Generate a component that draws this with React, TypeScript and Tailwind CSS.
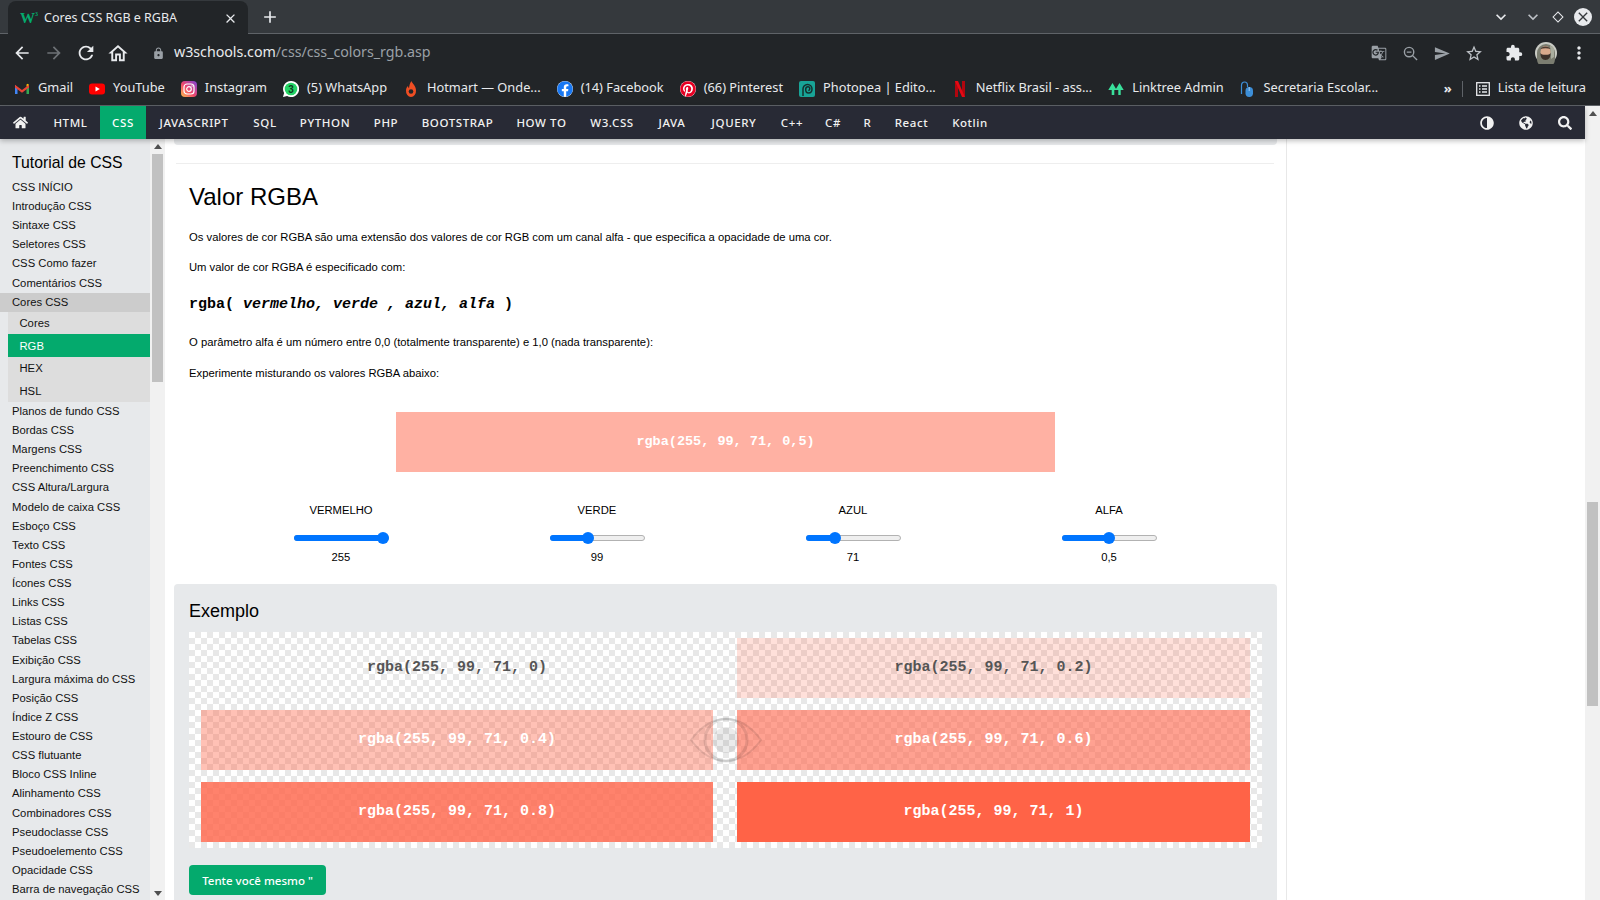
import React from "react";
import {
  MdArrowBack,
  MdArrowForward,
  MdRefresh,
  MdOutlineHome,
  MdLock,
  MdMoreVert,
  MdClose,
  MdAdd,
  MdExpandMore,
  MdSend,
  MdOutlineStarBorder,
  MdExtension,
  MdGTranslate,
} from "react-icons/md";
import { FaHome, FaAdjust, FaGlobeAmericas, FaSearch, FaFacebook, FaPinterest } from "react-icons/fa";

const GmailIcon = () => (
  <svg viewBox="0 0 16 16" className="w-4 h-4">
    <path d="M1 4v9h2.500V6.500z" fill="#4285f4" />
    <path d="M15 4v9h-2.500V6.500z" fill="#34a853" />
    <path d="M1 3.800 8 9l7-5.200v2.700L8 11.700 1 6.500z" fill="#ea4335" />
    <path d="M12.500 5.700 15 3.800 13.700 2.700 12.500 3.600z" fill="#fbbc04" />
  </svg>
);

const YoutubeIcon = () => (
  <svg viewBox="0 0 16 16" className="w-4 h-4">
    <rect x="0" y="2.500" width="16" height="11" rx="3" fill="#f00" />
    <path d="M6.500 5.500v5l4.300-2.500z" fill="#fff" />
  </svg>
);

const InstagramIcon = () => (
  <svg viewBox="0 0 16 16" className="w-4 h-4">
    <defs>
      <linearGradient id="ig" x1="0" y1="1" x2="1" y2="0">
        <stop offset="0" stopColor="#fdc04f" />
        <stop offset="0.45" stopColor="#f0476c" />
        <stop offset="1" stopColor="#7b44d6" />
      </linearGradient>
    </defs>
    <rect width="16" height="16" rx="4" fill="url(#ig)" />
    <rect x="3" y="3" width="10" height="10" rx="3" fill="none" stroke="#fff" strokeWidth="1.200" />
    <circle cx="8" cy="8" r="2.300" fill="none" stroke="#fff" strokeWidth="1.200" />
    <circle cx="11" cy="5" r="0.700" fill="#fff" />
  </svg>
);

const WhatsappIcon = () => (
  <svg viewBox="0 0 16 16" className="w-4 h-4">
    <path d="M8 0a8 8 0 0 0-6.900 12L0 16l4.100-1.100A8 8 0 1 0 8 0z" fill="#fff" />
    <circle cx="8" cy="8" r="6.300" fill="#25d366" />
    <text x="8" y="11.500" textAnchor="middle" fontSize="10" fontWeight="700" fill="#0e3d22" fontFamily="Liberation Sans, sans-serif">3</text>
  </svg>
);

const HotmartIcon = () => (
  <svg viewBox="0 0 16 16" className="w-4 h-4">
    <path d="M8.500 0c.4 2.500 4.500 4.500 4.500 9.500A5.200 6 0 0 1 8 16a5.200 6 0 0 1-5-6.500c0-2.200 1-3.700 2-4.500 0 1 .3 1.700 1 2.200C6.300 4.500 7 2 8.500 0z" fill="#ef4e23" />
    <circle cx="8" cy="10.500" r="2.300" fill="#222528" />
  </svg>
);

const PhotopeaIcon = () => (
  <svg viewBox="0 0 16 16" className="w-4 h-4">
    <rect width="16" height="16" rx="2" fill="#18a497" />
    <path d="M4 15V8a4.500 4.500 0 0 1 9 0c0 2.500-1.700 4-3.500 4S6.700 10.500 6.700 8.500 8 5.800 9 5.800s1.800.9 1.800 2-.7 1.700-1.500 1.700" fill="none" stroke="#14302e" strokeWidth="1.500" />
  </svg>
);

const NetflixIcon = () => (
  <svg viewBox="0 0 16 16" className="w-4 h-4">
    <path d="M3 0h3v16l-3 .3z" fill="#b1060f" />
    <path d="M10 0h3v16.300l-3-.3z" fill="#b1060f" />
    <path d="M3 0h3l7 16.300-3-.3z" fill="#e50914" />
  </svg>
);

const LinktreeIcon = () => (
  <svg viewBox="0 0 16 16" className="w-4 h-4">
    <path d="M4.500 2 8.700 9H6.300v5H3.700V9H.3z" fill="#39e09b" />
    <path d="M11.500 2 15.700 9h-3v5h-2.400V9H7.300z" fill="#39e09b" />
  </svg>
);

const MouseIcon = () => (
  <svg viewBox="0 0 16 16" className="w-4 h-4">
    <path d="M1.500 13V4.500C1.500 2 3 1 4.500 1S7.500 2 7.500 4.500V6" fill="none" stroke="#3d8fd8" strokeWidth="1.200" />
    <rect x="5.500" y="6" width="7.500" height="10" rx="3.700" fill="#3d8fd8" />
    <path d="M9.200 6v4" stroke="#bcdcf5" strokeWidth="0.800" />
  </svg>
);

const bookmarks: [React.ReactNode, string][] = [
  [<GmailIcon />, "Gmail"],
  [<YoutubeIcon />, "YouTube"],
  [<InstagramIcon />, "Instagram"],
  [<WhatsappIcon />, "(5) WhatsApp"],
  [<HotmartIcon />, "Hotmart — Onde..."],
  [
    <span className="flex w-4 h-4 items-center justify-center rounded-full bg-white">
      <FaFacebook className="text-[16px] text-[#1877f2]" />
    </span>,
    "(14) Facebook",
  ],
  [
    <span className="flex w-4 h-4 items-center justify-center rounded-full bg-white">
      <FaPinterest className="text-[16px] text-[#e60023]" />
    </span>,
    "(66) Pinterest",
  ],
  [<PhotopeaIcon />, "Photopea | Edito..."],
  [<NetflixIcon />, "Netflix Brasil - ass..."],
  [<LinktreeIcon />, "Linktree Admin"],
  [<MouseIcon />, "Secretaria Escolar..."],
];

const navItems: [string, string][] = [
  ["HTML", "w-[59px]"],
  ["CSS", "w-[46px] bg-[#04aa6d] text-white"],
  ["JAVASCRIPT", "w-[96px]"],
  ["SQL", "w-[46px]"],
  ["PYTHON", "w-[74px]"],
  ["PHP", "w-[48px]"],
  ["BOOTSTRAP", "w-[95px]"],
  ["HOW TO", "w-[73px]"],
  ["W3.CSS", "w-[68px]"],
  ["JAVA", "w-[52px]"],
  ["JQUERY", "w-[72px]"],
  ["C++", "w-[44px]"],
  ["C#", "w-[38px]"],
  ["R", "w-[31px]"],
  ["React", "w-[57px]"],
  ["Kotlin", "w-[60px]"],
];

const sideTop = ["CSS INÍCIO", "Introdução CSS", "Sintaxe CSS", "Seletores CSS", "CSS Como fazer", "Comentários CSS"];
const sideSub = ["Cores", "RGB", "HEX", "HSL"];
const sideBottom = [
  "Planos de fundo CSS",
  "Bordas CSS",
  "Margens CSS",
  "Preenchimento CSS",
  "CSS Altura/Largura",
  "Modelo de caixa CSS",
  "Esboço CSS",
  "Texto CSS",
  "Fontes CSS",
  "Ícones CSS",
  "Links CSS",
  "Listas CSS",
  "Tabelas CSS",
  "Exibição CSS",
  "Largura máxima do CSS",
  "Posição CSS",
  "Índice Z CSS",
  "Estouro de CSS",
  "CSS flutuante",
  "Bloco CSS Inline",
  "Alinhamento CSS",
  "Combinadores CSS",
  "Pseudoclasse CSS",
  "Pseudoelemento CSS",
  "Opacidade CSS",
  "Barra de navegação CSS",
];

const sliders = [
  { label: "VERMELHO", value: "255", pos: 1 },
  { label: "VERDE", value: "99", pos: 99 / 255 },
  { label: "AZUL", value: "71", pos: 71 / 255 },
  { label: "ALFA", value: "0,5", pos: 0.5 },
];

const swatches = [
  { text: "rgba(255, 99, 71, 0)", bg: "bg-[rgba(255,99,71,0)]", color: "text-[#555]" },
  { text: "rgba(255, 99, 71, 0.2)", bg: "bg-[rgba(255,99,71,0.2)]", color: "text-[#555]" },
  { text: "rgba(255, 99, 71, 0.4)", bg: "bg-[rgba(255,99,71,0.4)]", color: "text-white" },
  { text: "rgba(255, 99, 71, 0.6)", bg: "bg-[rgba(255,99,71,0.6)]", color: "text-white" },
  { text: "rgba(255, 99, 71, 0.8)", bg: "bg-[rgba(255,99,71,0.8)]", color: "text-white" },
  { text: "rgba(255, 99, 71, 1)", bg: "bg-[rgba(255,99,71,1)]", color: "text-white" },
];

function Slider({ pos }: { pos: number }) {
  // thumb is 12px on a 95px track, same travel as a native range input
  const center = 6 + pos * 83;
  return (
    <div className="relative w-[95px] h-3 flex items-center">
      <div className="w-full h-[6px] rounded-full bg-[#efefef] border border-[#b2b2b2]" />
      <div className="absolute left-0 h-[6px] rounded-full bg-[#0075ff]" style={{ width: center }} />
      <div className="absolute w-3 h-3 rounded-full bg-[#0075ff]" style={{ left: center - 6 }} />
    </div>
  );
}

function ScrollArrow({ down }: { down?: boolean }) {
  return (
    <svg viewBox="0 0 8 5" className="w-2 h-[5px] fill-[#505050]">
      <path d={down ? "M0 0h8L4 5z" : "M0 5h8L4 0z"} />
    </svg>
  );
}

export default function App() {
  return (
    <div className="w-[1600px] h-[900px] overflow-hidden flex flex-col bg-white font-['Liberation_Sans',sans-serif] text-black">
      {/* tab strip */}
      <div className="h-[34px] shrink-0 bg-[#35393d] border-b border-[#5f6368] flex items-end pl-2 pr-2 relative font-['Noto_Sans',sans-serif]">
        <div className="w-[240px] h-[33px] -mb-px pt-px bg-[#222528] rounded-t-lg flex items-center pl-3 pr-[10px] text-[#e8eaed]">
          <span className="w-4 flex items-start text-[#04aa6d] font-bold text-[15px] leading-none font-['Liberation_Serif',serif]">
            W<span className="text-[6px] leading-none">3</span>
          </span>
          <span className="ml-2 text-[12.5px] flex-1">Cores CSS RGB e RGBA</span>
          <MdClose className="text-[15px]" />
        </div>
        <MdAdd className="ml-3 mb-[6px] text-[20px] text-[#e8eaed]" />
        <div className="ml-auto flex items-center mb-[6px] text-[#e8eaed]">
          <MdExpandMore className="text-[20px]" />
          <MdExpandMore className="ml-3 text-[20px] text-[#bdc1c6]" />
          <div className="ml-[11px] w-2 h-2 rotate-45 border border-[#e8eaed]" />
          <div className="ml-3 w-[18px] h-[18px] rounded-full bg-[#e8eaed] flex items-center justify-center">
            <MdClose className="text-[16px] text-[#35393d]" />
          </div>
        </div>
      </div>

      {/* toolbar */}
      <div className="h-[38px] shrink-0 bg-[#222528] flex items-center text-[#e8eaed] font-['Noto_Sans',sans-serif]">
        <div className="flex items-center pl-[10px]">
          <MdArrowBack className="text-[20px] w-8 -ml-1" />
          <MdArrowForward className="text-[20px] w-8 text-[#6e7276]" />
          <MdRefresh className="text-[22px] w-8" />
          <MdOutlineHome className="text-[23px] w-8" />
        </div>
        <MdLock className="ml-[18px] text-[13px] text-[#9aa0a6]" />
        <span className="ml-[9px] pb-[2px] text-[14.25px] tracking-[-0.03px]">
          w3schools.com<span className="text-[#9aa0a6]">/css/css_colors_rgb.asp</span>
        </span>
        <div className="ml-auto flex items-center pr-[11px]">
          <MdGTranslate className="text-[16px] text-[#9aa0a6] w-8" />
          <svg viewBox="0 0 16 16" className="w-[15px] h-[15px] mx-[8px] fill-none stroke-[#9aa0a6] stroke-[1.500]">
            <circle cx="6.500" cy="6.500" r="5" />
            <path d="M10 10l5 5M4 6.500h5" />
          </svg>
          <MdSend className="text-[17px] text-[#9aa0a6] w-8" />
          <MdOutlineStarBorder className="text-[19px] text-[#bdc1c6] w-8" />
          <MdExtension className="ml-2 text-[18px] w-8" />
          <svg viewBox="0 0 22 22" className="w-[22px] h-[22px] ml-[5px]">
            <circle cx="11" cy="11" r="11" fill="#c9cbc4" />
            <path d="M2 11a9 9 0 0 1 18 0v6a9 9 0 0 1-18 0z" fill="#7b7d70" />
            <path d="M15 3l4 3v9l-3 2z" fill="#a9ad9e" />
            <ellipse cx="10.500" cy="10" rx="5" ry="6" fill="#d9a98c" />
            <path d="M5.500 11c1 1.500 2 1.800 5 1.800s4-.3 5-1.800c.3 4-1.500 7-5 7s-5.300-3-5-7z" fill="#3d302a" />
            <path d="M5.500 7c1-3.500 9-3.500 10 0-3-1-7-1-10 0z" fill="#4b3b30" />
          </svg>
          <MdMoreVert className="ml-3 text-[20px] w-5" />
        </div>
      </div>

      {/* bookmarks */}
      <div className="h-[34px] shrink-0 bg-[#222528] border-b border-[#5f6368] flex items-center pl-[14px] text-[12.8px] text-[#e8eaed] font-['Noto_Sans',sans-serif]">
        <div className="flex items-center gap-4">
          {bookmarks.map(([icon, label]) => (
            <div key={label} className="flex items-center gap-2 whitespace-nowrap">
              {icon}
              <span className="pb-[2px]">{label}</span>
            </div>
          ))}
        </div>
        <div className="ml-auto flex items-center pr-[14px]">
          <span className="text-[13px] font-bold leading-none">»</span>
          <div className="ml-[10px] w-px h-4 bg-[#5f6368]" />
          <svg viewBox="0 0 14 14" className="ml-[13px] w-[14px] h-[14px] fill-none stroke-[#e8eaed] stroke-[1.300]">
            <rect x="0.700" y="0.700" width="12.600" height="12.600" />
            <path d="M3 4h1.500M6 4h5M3 7h1.500M6 7h5M3 10h1.500M6 10h5" />
          </svg>
          <span className="ml-2 pb-[2px]">Lista de leitura</span>
        </div>
      </div>

      <div className="flex-1 min-h-0 flex relative">
        <div className="flex-1 min-w-0 flex flex-col">
          {/* w3schools nav */}
          <div className="h-[33px] shrink-0 bg-[#282a35] flex items-stretch text-[#f1f1f1] text-[11.5px] font-medium tracking-[0.6px] font-['Noto_Sans',sans-serif] shadow-[0_2px_5px_rgba(0,0,0,0.25)] relative z-10">
            <div className="w-[41px] flex items-center justify-center">
              <FaHome className="text-[15px]" />
            </div>
            {navItems.map(([label, cls]) => (
              <div key={label} className={"pt-px flex items-center justify-center whitespace-nowrap " + cls}>
                {label}
              </div>
            ))}
            <div className="ml-auto flex items-center gap-[25px] pr-[13px] text-[14px]">
              <FaAdjust className="-scale-x-100" />
              <FaGlobeAmericas />
              <FaSearch />
            </div>
          </div>

          <div className="flex-1 min-h-0 flex overflow-hidden">
            {/* sidebar */}
            <div className="w-[150px] shrink-0 bg-[#e7e9eb] text-[11.25px] text-[#111]">
              <div className="pl-3 h-[38.9px] flex items-end text-[15.75px] leading-[24px] text-black pb-[3px]">Tutorial de CSS</div>
              {sideTop.map((s) => (
                <div key={s} className="pl-3 leading-[19.125px]">{s}</div>
              ))}
              <div className="pl-3 leading-[19.125px] h-[19.3px] bg-[#cccccc]">Cores CSS</div>
              <div className="ml-2 bg-[#dddddd]">
                {sideSub.map((s) => (
                  <div key={s} className={"pl-[11.5px] pt-[0.5px] h-[22.5px] leading-[22.5px] " + (s === "RGB" ? "bg-[#04aa6d] text-white" : "")}>
                    {s}
                  </div>
                ))}
              </div>
              {sideBottom.map((s) => (
                <div key={s} className="pl-3 leading-[19.125px] whitespace-nowrap">{s}</div>
              ))}
            </div>
            <div className="w-[15px] shrink-0 bg-[#f1f1f1] flex flex-col items-center justify-between pt-[5px] pb-[4px]">
              <ScrollArrow />
              <div className="w-[11px] h-[228px] bg-[#c1c1c1] mt-[5px]" />
              <div className="flex-1" />
              <ScrollArrow down />
            </div>

            {/* main content */}
            <div className="w-[1122px] shrink-0 border-r border-[#e8e8e8] relative text-[11.25px] leading-[17px]">
              <div className="w-[1103px] ml-[9px] h-[6px] bg-[#e7e9eb] rounded-b" />
              <div className="ml-[11px] w-[1098px] mt-[18px] h-px bg-[#eeeeee]" />
              <div className="pl-6">
                <h2 className="mt-[15px] text-[24px] leading-[36px]">Valor RGBA</h2>
                <p className="mt-[13.500px]">Os valores de cor RGBA são uma extensão dos valores de cor RGB com um canal alfa - que especifica a opacidade de uma cor.</p>
                <p className="mt-[13px]">Um valor de cor RGBA é especificado com:</p>
                <p className="mt-[18.500px] leading-[22px] text-[15px] font-bold font-['Liberation_Mono',monospace]">
                  rgba( <i>vermelho, verde , azul, alfa</i> )
                </p>
                <p className="mt-[17.500px]">O parâmetro alfa é um número entre 0,0 (totalmente transparente) e 1,0 (nada transparente):</p>
                <p className="mt-[14px]">Experimente misturando os valores RGBA abaixo:</p>
              </div>

              <div className="ml-[231px] mt-[30.500px] w-[659px] h-[60px] pb-[2px] bg-[rgba(255,99,71,0.5)] flex items-center justify-center text-white text-[13.500px] font-bold font-['Liberation_Mono',monospace]">
                rgba(255, 99, 71, 0,5)
              </div>

              <div className="ml-12 mt-[29.500px] w-[1024px] grid grid-cols-4">
                {sliders.map((s) => (
                  <div key={s.label} className="flex flex-col items-center">
                    <div>{s.label}</div>
                    <div className="mt-[13.500px]">
                      <Slider pos={s.pos} />
                    </div>
                    <div className="mt-[4.500px]">{s.value}</div>
                  </div>
                ))}
              </div>

              <div className="ml-[9px] mt-[18.500px] w-[1103px] bg-[#e7e9eb] rounded px-[15px] pt-[13.500px] pb-5">
                <h3 className="text-[18px] leading-[27px]">Exemplo</h3>
                <div className="mt-[7.500px] w-[1073px] px-3 py-1.5 grid grid-cols-[512px_513px] gap-x-6 gap-y-3 bg-[conic-gradient(#e8e8e8_25%,#fff_0_50%,#e8e8e8_0_75%,#fff_0)] bg-[length:12px_12px]">
                  {swatches.map((s) => (
                    <div key={s.text} className={"h-[60px] pb-[2px] flex items-center justify-center text-[15px] font-bold font-['Liberation_Mono',monospace] " + s.bg + " " + s.color}>
                      {s.text}
                    </div>
                  ))}
                </div>
                <button className="mt-[17px] w-[137px] h-[30px] rounded bg-[#04aa6d] text-white text-[11.500px] font-medium font-['Noto_Sans',sans-serif]">
                  Tente você mesmo "
                </button>
              </div>

              {/* faint eye watermark over the swatches */}
              <svg viewBox="0 0 72 48" className="absolute left-[525px] top-[577px] w-[72px] h-[48px] fill-none stroke-[rgba(0,0,0,0.1)]">
                <path d="M1 24C12 9 24 3 36 3s24 6 35 21C60 39 48 45 36 45S12 39 1 24z" strokeWidth="2" />
                <circle cx="36" cy="24" r="21" strokeWidth="3" />
                <circle cx="36" cy="24" r="13" fill="rgba(0,0,0,0.08)" stroke="none" />
              </svg>
            </div>
            <div className="flex-1" />
          </div>
        </div>

        {/* page scrollbar */}
        <div className="w-[15px] shrink-0 bg-[#f1f1f1] flex flex-col items-center pt-[5px]">
          <ScrollArrow />
          <div className="w-[11px] h-[204px] bg-[#c1c1c1] mt-[386px]" />
        </div>
      </div>
    </div>
  );
}
